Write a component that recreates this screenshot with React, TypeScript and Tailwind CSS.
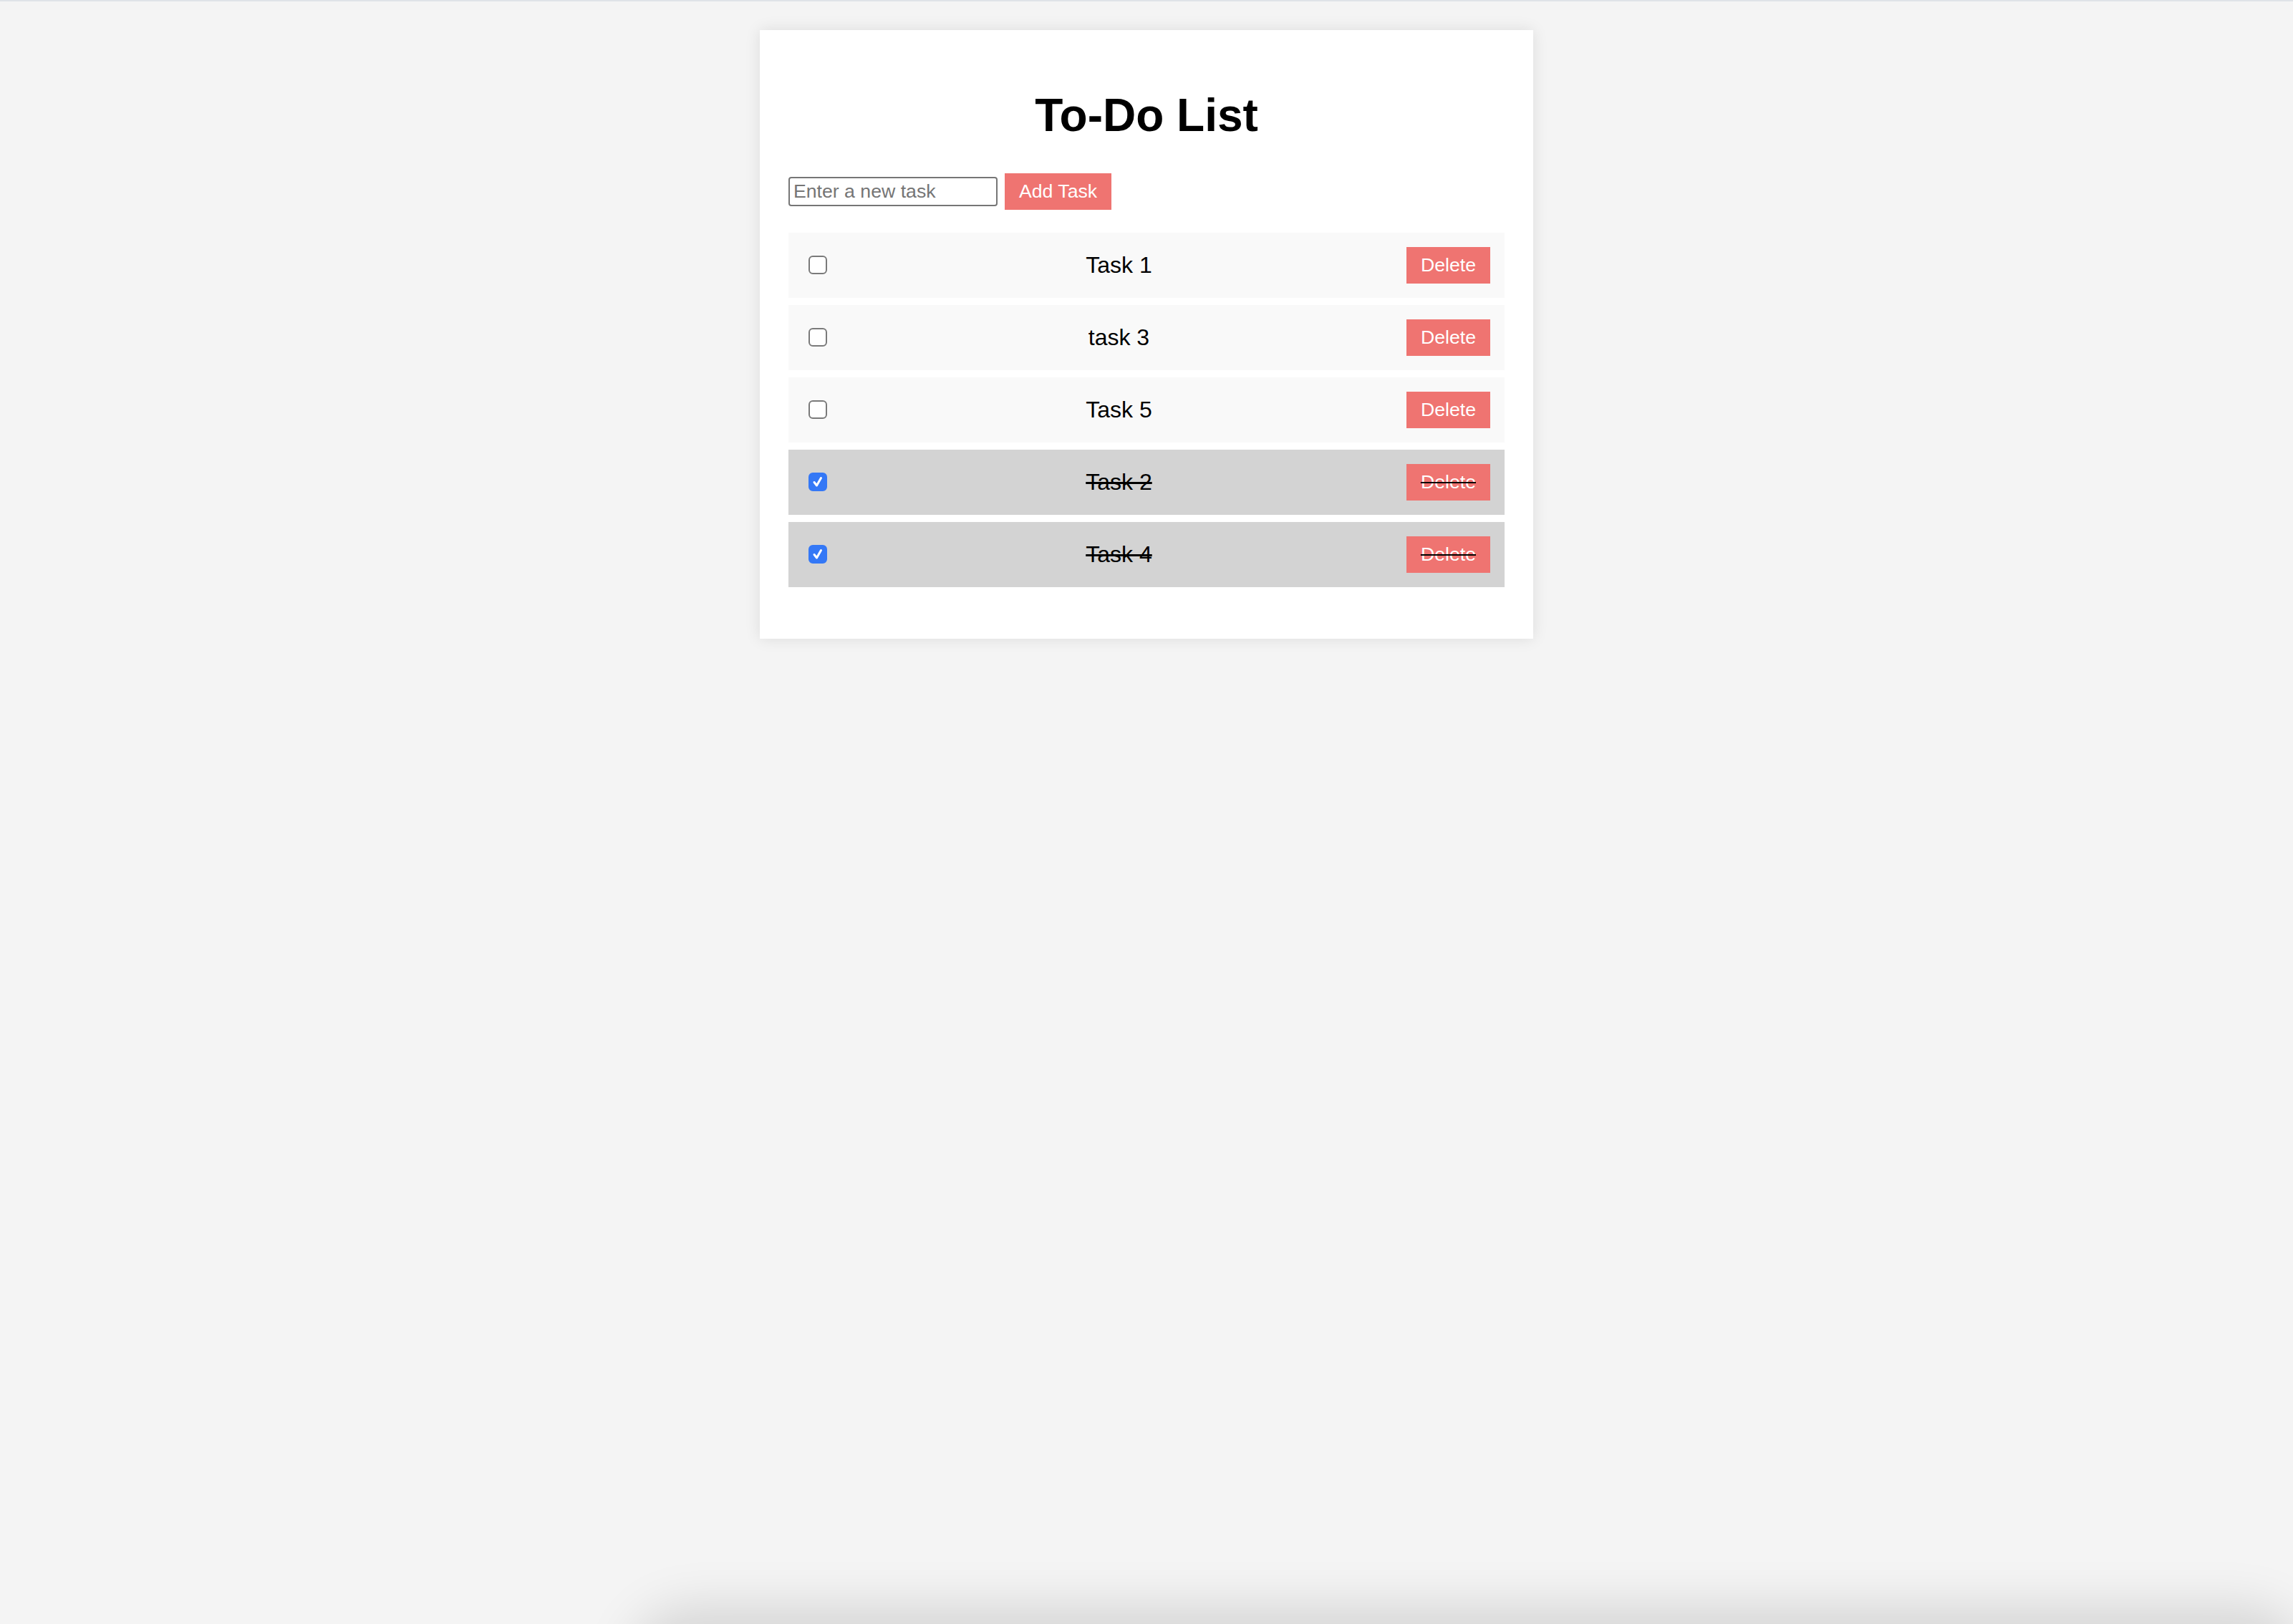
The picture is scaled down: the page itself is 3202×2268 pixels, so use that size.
import { useState } from 'react';

type Task = {
  id: number;
  text: string;
  done: boolean;
};

const initialTasks: Task[] = [
  { id: 1, text: 'Task 1', done: false },
  { id: 3, text: 'task 3', done: false },
  { id: 5, text: 'Task 5', done: false },
  { id: 2, text: 'Task 2', done: true },
  { id: 4, text: 'Task 4', done: true },
];

export default function App() {
  const [tasks, setTasks] = useState<Task[]>(initialTasks);
  const [newTask, setNewTask] = useState('');

  function addTask() {
    if (!newTask.trim()) return;
    setTasks([...tasks, { id: Date.now(), text: newTask.trim(), done: false }]);
    setNewTask('');
  }

  function toggleTask(id: number) {
    setTasks(tasks.map((t) => (t.id === id ? { ...t, done: !t.done } : t)));
  }

  function deleteTask(id: number) {
    setTasks(tasks.filter((t) => t.id !== id));
  }

  // unfinished first, finished at the bottom
  const sorted = [...tasks.filter((t) => !t.done), ...tasks.filter((t) => t.done)];

  return (
    <div className="relative min-h-screen overflow-hidden border-t-2 border-[#dfe3e8] bg-[#f4f4f4] font-['Liberation_Sans',Arial,sans-serif] text-black">
      <div className="mx-auto mt-[40px] w-[1080px] bg-white p-[40px] shadow-[0_0_20px_rgba(0,0,0,0.1)]">
        <h1 className="my-[43px] text-center text-[64px] font-bold leading-[1.15]">To-Do List</h1>

        <div className="flex items-center gap-[10px]">
          <input
            type="text"
            value={newTask}
            onChange={(e) => setNewTask(e.target.value)}
            placeholder="Enter a new task"
            className="h-[41px] w-[292px] rounded-[4px] border-2 border-[#767676] bg-white px-[5px] text-[26.67px] outline-none placeholder:text-[#757575]"
          />
          <button
            onClick={addTask}
            className="h-[51px] bg-[#ef7471] px-[20px] text-[26.67px] leading-[1.15] text-white"
          >
            Add Task
          </button>
        </div>

        <ul className="my-[32px] flex flex-col gap-[10px]">
          {sorted.map((task) => (
            <li
              key={task.id}
              className={`flex h-[91px] items-center px-[20px] ${task.done ? 'bg-[#d3d3d3] line-through' : 'bg-[#f9f9f9]'}`}
            >
              <label className="relative ml-[8px] mr-[6px] flex h-[26px] w-[26px] items-center justify-center">
                <input
                  type="checkbox"
                  checked={task.done}
                  onChange={() => toggleTask(task.id)}
                  className="h-[26px] w-[26px] appearance-none rounded-[6px] border-2 border-[#7a7a7a] bg-white checked:border-[#3478f6] checked:bg-[#3478f6]"
                />
                {task.done && (
                  <svg viewBox="0 0 26 26" className="pointer-events-none absolute inset-0 h-[26px] w-[26px]">
                    <path d="M8 13.5 L11.5 18 L17.5 7.5" fill="none" stroke="white" strokeWidth="3" strokeLinecap="round" strokeLinejoin="round" />
                  </svg>
                )}
              </label>
              <span className="flex-1 text-center text-[32px]">{task.text}</span>
              <button
                onClick={() => deleteTask(task.id)}
                className={`h-[51px] bg-[#ef7471] px-[20px] text-[26.67px] leading-[1.15] text-white ${task.done ? 'line-through decoration-black' : ''}`}
              >
                Delete
              </button>
            </li>
          ))}
        </ul>
      </div>

      {/* shadow of something sitting just below the window */}
      <div className="pointer-events-none absolute left-[905px] right-[8px] top-[2268px] h-[200px] rounded-[60px] shadow-[0_0_70px_25px_rgba(0,0,0,0.13)]" />
    </div>
  );
}
